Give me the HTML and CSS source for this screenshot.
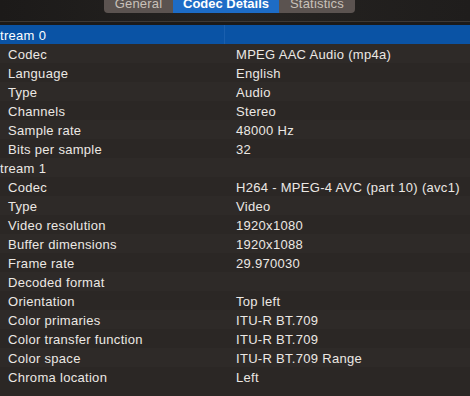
FILE: index.html
```html
<!DOCTYPE html>
<html lang="en">
<head>
	<meta charset="UTF-8">
	<title>Codec Details</title>
	<link rel="stylesheet" href="styles.css">
</head>
<body>
	<header class="toolbar">
		<nav class="tabs">
			<span class="tab">General</span>
			<span class="tab active">Codec Details</span>
			<span class="tab">Statistics</span>
		</nav>
	</header>

	<div class="table">
		<div class="row stream selected"><span class="key">tream 0</span><span class="val"></span></div>
		<div class="row"><span class="key">Codec</span><span class="val">MPEG AAC Audio (mp4a)</span></div>
		<div class="row"><span class="key">Language</span><span class="val">English</span></div>
		<div class="row"><span class="key">Type</span><span class="val">Audio</span></div>
		<div class="row"><span class="key">Channels</span><span class="val">Stereo</span></div>
		<div class="row"><span class="key">Sample rate</span><span class="val">48000 Hz</span></div>
		<div class="row"><span class="key">Bits per sample</span><span class="val">32</span></div>
		<div class="row stream"><span class="key">tream 1</span><span class="val"></span></div>
		<div class="row"><span class="key">Codec</span><span class="val">H264 - MPEG-4 AVC (part 10) (avc1)</span></div>
		<div class="row"><span class="key">Type</span><span class="val">Video</span></div>
		<div class="row"><span class="key">Video resolution</span><span class="val">1920x1080</span></div>
		<div class="row"><span class="key">Buffer dimensions</span><span class="val">1920x1088</span></div>
		<div class="row"><span class="key">Frame rate</span><span class="val">29.970030</span></div>
		<div class="row"><span class="key">Decoded format</span><span class="val"></span></div>
		<div class="row"><span class="key">Orientation</span><span class="val">Top left</span></div>
		<div class="row"><span class="key">Color primaries</span><span class="val">ITU-R BT.709</span></div>
		<div class="row"><span class="key">Color transfer function</span><span class="val">ITU-R BT.709</span></div>
		<div class="row"><span class="key">Color space</span><span class="val">ITU-R BT.709 Range</span></div>
		<div class="row"><span class="key">Chroma location</span><span class="val">Left</span></div>
	</div>
</body>
</html>
```

FILE: styles.css
```css
	/**
	 * Window base
	 */
	html, body {
		margin: 0;
		height: 100%;
		background: #2b2725;
		overflow: hidden;
	}
	body {
		font: 13px/19px "Liberation Sans", Arial, sans-serif;
		letter-spacing: .3px;
		color: #ece8e4;
	}

	/**
	 * Toolbar with segmented tabs
	 */
	.toolbar {
		height: 21px;
		background: linear-gradient(to right, #1c1a19, #252321 50%, #1f1d1c);
		border-bottom: 1px solid #3d3936;
		box-shadow: 0 3px 0 #1c1a19;
		margin-bottom: 3px;
	}
	.tabs {
		display: flex;
		margin-left: 104px;
		width: 251px;
		height: 13px;
		border-radius: 0 0 4px 4px;
		overflow: hidden;
		background: #5b5350;
	}
	.tab {
		display: block;
		margin-top: -5px;
		text-align: center;
		color: #c9c1b9;
		font-size: 13px;
		line-height: 18px;
		letter-spacing: .2px;
	}
	.tab:nth-child(1) { width: 69px; }
	.tab:nth-child(2) { width: 106px; }
	.tab:nth-child(3) { width: 76px; }
	.tab.active {
		background: #1d6cc6;
		color: #fff;
		font-weight: bold;
		letter-spacing: 0;
	}

	/**
	 * Info table
	 */
	.row {
		display: flex;
		box-sizing: border-box;
		height: 19px;
		padding-top: 1px;
	}
	.row:nth-child(even) {
		background: #2e2a28;
	}
	.key {
		width: 224px;
		padding-left: 8px;
		white-space: nowrap;
	}
	.val {
		padding-left: 4px;
		white-space: nowrap;
	}
	.stream .key {
		padding-left: 0;
	}
	.row.selected {
		background: #0a53a5;
		color: #fff;
	}
	.row.selected .val {
		flex: 1;
		margin-top: -1px;
		border-left: 1px solid #1a5fae;
	}
```
